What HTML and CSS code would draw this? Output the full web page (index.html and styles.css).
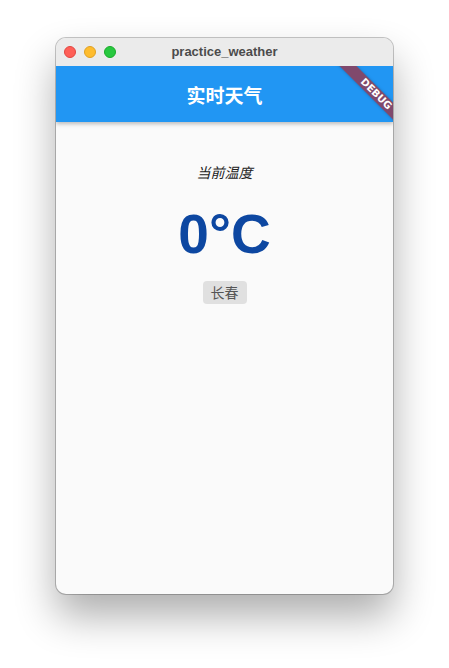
FILE: index.html
```html
<!DOCTYPE html>
<html lang="zh">
<head>
<meta charset="utf-8">
<link rel="stylesheet" href="styles.css">
</head>
<body>
<div class="window">
  <div class="titlebar">
    <div class="lights">
      <span class="light red"></span>
      <span class="light yellow"></span>
      <span class="light green"></span>
    </div>
    <div class="wtitle">practice_weather</div>
  </div>
  <div class="app">
    <div class="appbar">实时天气</div>
    <div class="content">
      <div class="label">当前温度</div>
      <div class="temp">0°C</div>
      <div class="chip">长春</div>
    </div>
    <div class="banner"><span>DEBUG</span></div>
  </div>
</div>
</body>
</html>
```
FILE: styles.css
```css
html, body {
  margin: 0;
  padding: 0;
  background: #ffffff;
}
body {
  box-sizing: border-box;
  min-height: 668px;
  padding: 38px 0 74px 56px;
  font-family: "Liberation Sans", "Noto Sans CJK SC", sans-serif;
}
.window {
  width: 337px;
  height: 556px;
  border-radius: 10px;
  overflow: hidden;
  background: #fafafa;
  box-shadow: 0 0 0 1px rgba(0,0,0,0.22), 0 22px 40px rgba(0,0,0,0.32);
  display: flex;
  flex-direction: column;
}
.titlebar {
  height: 28px;
  flex: none;
  background: #ebebeb;
  position: relative;
  display: flex;
  align-items: center;
}
.lights {
  display: flex;
  gap: 8px;
  padding-left: 8px;
}
.light {
  width: 12px;
  height: 12px;
  border-radius: 50%;
  box-sizing: border-box;
}
.red { background: #fe5f57; border: 0.5px solid #e14640; }
.yellow { background: #febc2e; border: 0.5px solid #dfa023; }
.green { background: #28c840; border: 0.5px solid #1aab29; }
.wtitle {
  position: absolute;
  left: 0;
  right: 0;
  top: 0;
  line-height: 28px;
  text-align: center;
  font-size: 13px;
  font-weight: bold;
  color: #4b4b4b;
}
.app {
  flex: 1;
  position: relative;
  overflow: hidden;
  display: flex;
  flex-direction: column;
}
.appbar {
  height: 56px;
  flex: none;
  background: #2196f3;
  color: #ffffff;
  font-family: "Noto Sans CJK SC", sans-serif;
  font-size: 19px;
  font-weight: bold;
  display: flex;
  align-items: center;
  justify-content: center;
  box-shadow: 0 2px 4px rgba(0,0,0,0.25);
  position: relative;
  z-index: 1;
}
.content {
  display: flex;
  flex-direction: column;
  align-items: center;
  padding-top: 38px;
}
.label {
  font-family: "Noto Sans CJK SC", sans-serif;
  font-style: italic;
  font-size: 14px;
  color: #222222;
  line-height: 24px;
}
.temp {
  margin-top: 19px;
  font-family: "Liberation Sans", "Noto Sans CJK SC", sans-serif;
  font-weight: bold;
  font-size: 55px;
  color: #0d47a1;
  line-height: 62px;
}
.chip {
  margin-top: 16px;
  background: #e0e0e0;
  border-radius: 4px;
  padding: 0 8px;
  height: 23px;
  line-height: 23px;
  font-family: "Noto Sans CJK SC", sans-serif;
  font-size: 14px;
  color: #555555;
}
.banner {
  position: absolute;
  top: 0;
  right: 0;
  width: 80px;
  height: 80px;
  overflow: hidden;
  z-index: 2;
  pointer-events: none;
}
.banner span {
  position: absolute;
  width: 100px;
  height: 12px;
  line-height: 12px;
  left: 13px;
  top: 22px;
  transform: rotate(45deg);
  background: rgba(183, 28, 28, 0.63);
  color: #ffffff;
  font-family: "DejaVu Sans", sans-serif;
  font-weight: bold;
  font-size: 10px;
  text-align: center;
  box-shadow: 0 0 3px rgba(0,0,0,0.25);
}
```
